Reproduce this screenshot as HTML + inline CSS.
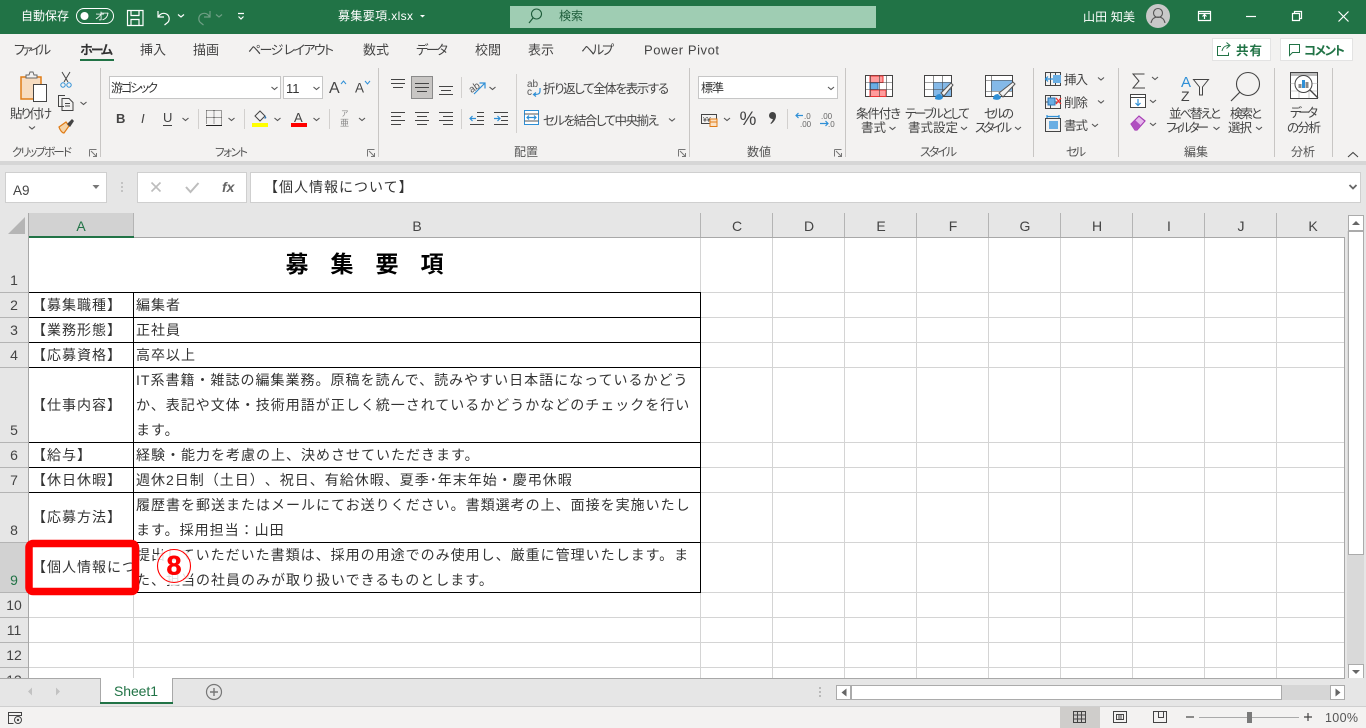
<!DOCTYPE html>
<html lang="ja">
<head>
<meta charset="utf-8">
<title>募集要項.xlsx - Excel</title>
<style>
html,body{margin:0;padding:0;width:1366px;height:728px;overflow:hidden;background:#fff}
svg{position:absolute;left:0;top:0;display:block}
text{font-family:"Liberation Sans","Noto Sans CJK JP",sans-serif;white-space:pre;text-spacing-trim:space-all}
text[textLength]{font-feature-settings:"palt"}
.r{font-size:12.5px;fill:#444}
.w{font-size:12px;fill:#fff}
.tab{font-size:13px;fill:#444}
.n{font-size:14px;fill:#444;text-anchor:middle}
.c{font-size:14px;fill:#333;letter-spacing:1px}
.i{fill:none;stroke:#444;stroke-width:1}
.iw{fill:none;stroke:#fff;stroke-width:1.2}
.b{fill:none;stroke:#2e8fd6;stroke-width:1.2}
.ch{fill:none;stroke:#555;stroke-width:1.1}
.l{fill:none;stroke:#777;stroke-width:1}
</style>
</head>
<body>
<svg width="1366" height="728" viewBox="0 0 1366 728" xmlns="http://www.w3.org/2000/svg">
<!-- backgrounds -->
<rect x="0" y="0" width="1366" height="34" fill="#217346"/>
<rect x="0" y="34" width="1366" height="127" fill="#f3f2f1"/>
<rect x="0" y="161" width="1366" height="4" fill="#d6d6d6"/>
<rect x="0" y="165" width="1366" height="72" fill="#e6e6e6"/>
<rect x="0" y="237" width="28" height="441" fill="#e6e6e6"/>
<rect x="29" y="237" width="1316" height="441" fill="#fff"/>
<rect x="1345" y="213" width="21" height="465" fill="#e6e6e6"/>

<!-- title bar -->
<text class="w" x="21" y="20" textLength="48">自動保存</text>
<rect x="76.500" y="8.500" width="37" height="15" rx="7.500" fill="none" stroke="#fff"/>
<circle cx="84.500" cy="16" r="4" fill="#fff"/>
<text x="95" y="20" font-size="10" fill="#fff" textLength="14">オフ</text>
<path class="iw" d="M127.500 10.500h15.500v15h-15.500zM131 10.500v5h8v-5M131 25.500v-6h8v6"/>
<path class="iw" d="M158 11v6h6M158.500 16.500c2-3 5-4 8-2.500 3.500 2 3.500 7 .5 9l-2.500 2"/>
<path class="iw" d="M178 14.500l3 2.500 3-2.500"/>
<path d="M210 11v6h-6M209.500 16.500c-2-3-5-4-8-2.500-3.500 2-3.500 7-.5 9l2.500 2" fill="none" stroke="#6f9f85" stroke-width="1.200"/>
<path d="M216 14.500l3 2.500 3-2.500" fill="none" stroke="#6f9f85" stroke-width="1.200"/>
<path class="iw" d="M238 13.500h6M238.500 16.500l2.500 2.500 2.500-2.500"/>
<text class="w" x="338" y="20" textLength="75">募集要項.xlsx</text>
<path d="M420 15h5l-2.500 2.500z" fill="#fff"/>
<rect x="510" y="6" width="366" height="22" fill="#9fcdb3"/>
<circle cx="536.500" cy="14" r="5" fill="none" stroke="#1d5c3a" stroke-width="1.100"/>
<path d="M533 18l-4 5" stroke="#1d5c3a" stroke-width="1.200"/>
<text x="559" y="20" font-size="12" fill="#1d5c3a" textLength="24">検索</text>
<text class="w" x="1083" y="21" textLength="52">山田 知美</text>
<circle cx="1158" cy="16" r="12" fill="#c8c8c8"/>
<circle cx="1158" cy="13" r="4.500" fill="none" stroke="#555" stroke-width="1.100"/>
<path d="M1151 23c1-5 4-6 7-6s6 1 7 6" fill="none" stroke="#555" stroke-width="1.100"/>
<path class="iw" d="M1198.500 11.500h12v9h-12zM1198.500 13.500h12M1204.500 19v-4M1202.500 16.500l2-2 2 2" stroke-width="1"/>
<path class="iw" d="M1246 16.500h10" stroke-width="1"/>
<path class="iw" d="M1292.500 13.500h7v7h-7zM1294.500 13.500v-2h7v7h-2" stroke-width="1"/>
<path class="iw" d="M1338.500 11.500l10 10M1348.500 11.500l-10 10" stroke-width="1"/>

<!-- tabs -->
<text class="tab" x="14" y="54.500" textLength="37">ファイル</text>
<text class="tab" x="80" y="54.500" textLength="33" font-weight="700" style="fill:#333">ホーム</text>
<rect x="80" y="59" width="34" height="2" fill="#217346"/>
<text class="tab" x="140" y="54.500" textLength="26">挿入</text>
<text class="tab" x="193" y="54.500" textLength="26">描画</text>
<text class="tab" x="248" y="54.500" textLength="86">ページ レイアウト</text>
<text class="tab" x="363" y="54.500" textLength="26">数式</text>
<text class="tab" x="416" y="54.500" textLength="32">データ</text>
<text class="tab" x="475" y="54.500" textLength="26">校閲</text>
<text class="tab" x="528" y="54.500" textLength="26">表示</text>
<text class="tab" x="581" y="54.500" textLength="33">ヘルプ</text>
<text class="tab" x="644" y="54.500" textLength="75">Power Pivot</text>

<!-- share / comment -->
<rect x="1212.500" y="38.500" width="58" height="22" fill="#fff" stroke="#e3e3e3"/>
<path d="M1221 46.500h-3.500v9h11v-3M1222 51c1-4 3-5.500 7-5.500M1226.500 42.500l3.500 3-3.500 3" fill="none" stroke="#217346" stroke-width="1"/>
<text x="1236" y="55" font-size="12.500" font-weight="700" fill="#217346" textLength="26">共有</text>
<rect x="1280.500" y="38.500" width="72" height="22" fill="#fff" stroke="#e3e3e3"/>
<path d="M1289.500 44.500h10v8h-7l-3 3z" fill="none" stroke="#217346" stroke-width="1"/>
<text x="1304" y="55" font-size="12.500" font-weight="700" fill="#217346" textLength="41">コメント</text>

<!-- ribbon separators -->
<path d="M100.500 68v89M378.500 68v89M689.500 68v89M845.500 68v89M1033.500 68v89M1118.500 68v89M1274.500 68v89M1332.500 68v89" stroke="#c8c6c4" fill="none"/>
<path d="M198.500 109v20M244.500 109v20M329.500 109v20M461.500 77v21M461.500 109v20M516.500 74v59M787.500 109v20" stroke="#d2d0ce" fill="none"/>

<!-- clipboard -->
<rect x="21" y="77" width="20" height="22" fill="#f7dcc0" stroke="#e07c17" stroke-width="1.500"/>
<path d="M26 77v-2h3l1-3h3l1 3h3v3h-11z" fill="#f3f2f1" stroke="#666"/>
<rect x="33.500" y="84.500" width="13" height="17" fill="#fff" stroke="#444"/>
<text class="r" x="10" y="118" textLength="42">貼り付け</text>
<path class="ch" d="M29 126.500l3 2.500 3-2.500"/>
<path d="M62 72l6 10M70 72l-6 10" stroke="#444" fill="none"/>
<circle cx="63" cy="85" r="2.200" fill="none" stroke="#2e8fd6"/>
<circle cx="69" cy="85" r="2.200" fill="none" stroke="#2e8fd6"/>
<path class="i" d="M64 106.500h-5.500v-11h6.500M62 98.500h7l4 4v8h-11z"/>
<path class="i" d="M65 103.500h5M65 106h5" stroke-width=".8"/>
<path class="ch" d="M80.500 102l3 2.500 3-2.500"/>
<path d="M59 127l7-5 3 4-5 7c-2 0-4-3-5-6z" fill="#f5d4a8" stroke="#e07c17" stroke-width="1.200"/>
<path d="M67 124l5-5 2 2-4 6z" fill="#444"/>
<text x="12" y="156" font-size="11.500" fill="#555" textLength="60">クリップボード</text>
<path class="l" d="M89.500 149.500h7M89.500 149.500v7M91 151l5 5M96.500 153v3.500h-3.500"/>

<!-- font -->
<rect x="109.500" y="76.500" width="171" height="22" fill="#fff" stroke="#c6c6c6"/>
<text x="111" y="92" font-size="12" fill="#333" textLength="47">游ゴシック</text>
<path class="ch" d="M271.500 87l3 2.500 3-2.500"/>
<rect x="283.500" y="76.500" width="39" height="22" fill="#fff" stroke="#c6c6c6"/>
<text x="286" y="93" font-size="13" fill="#333">11</text>
<path class="ch" d="M313.500 87l3 2.500 3-2.500"/>
<text x="329" y="93" font-size="16" fill="#444">A</text>
<path d="M341 84l2.500-3 2.500 3" stroke="#2e8fd6" fill="none"/>
<text x="355" y="92.500" font-size="13.500" fill="#444">A</text>
<path d="M365 81l2.500 3 2.500-3" stroke="#2e8fd6" fill="none"/>
<text x="116" y="123" font-size="13" font-weight="700" fill="#444">B</text>
<text x="141" y="123" font-size="13" font-style="italic" fill="#444" font-family="Liberation Serif">I</text>
<text x="163" y="122" font-size="13" fill="#444">U</text>
<path d="M163 125.500h9" stroke="#444" fill="none"/>
<path class="ch" d="M182.500 118l3 2.500 3-2.500"/>
<path d="M206.500 110.500h15v14M206.500 110.500v14M214 110.500v14M206.500 117.500h15" fill="none" stroke="#444" stroke-dasharray="1 1"/>
<path d="M206 125.500h16" stroke="#222" fill="none"/>
<path class="ch" d="M228.500 118l3 2.500 3-2.500"/>
<path d="M255 116l5-5 5 5-5 5z" fill="none" stroke="#444"/>
<path d="M265 115l1.500 3-2 1z" fill="#2e75b6"/>
<rect x="252" y="123" width="16" height="4" fill="#ffff00"/>
<path class="ch" d="M274.500 118l3 2.500 3-2.500"/>
<text x="294" y="122" font-size="13" fill="#444">A</text>
<rect x="291" y="123" width="16" height="4" fill="#f00"/>
<path class="ch" d="M313.500 118l3 2.500 3-2.500"/>
<text x="341" y="116" font-size="7.500" fill="#888">ア</text>
<text x="340" y="126" font-size="9" fill="#888">亜</text>
<path class="ch" d="M359 118l3 2.500 3-2.500"/>
<text x="215" y="156" font-size="11.500" fill="#555" textLength="33">フォント</text>
<path class="l" d="M367.500 149.500h7M367.500 149.500v7M369 151l5 5M374.500 153v3.500h-3.500"/>

<!-- alignment -->
<path class="i" d="M391 79.500h14M391 83.500h14M393 87.500h10"/>
<rect x="411.500" y="76.500" width="21" height="22" fill="#c8c6c4" stroke="#8a8a8a"/>
<path class="i" d="M415 83.500h14M415 87.500h14M417 91.500h10"/>
<path class="i" d="M439 86.500h14M441 90.500h10M439 94.500h14"/>
<path class="i" d="M391 112.500h14M391 116.500h10M391 120.500h14M391 124.500h10"/>
<path class="i" d="M415 112.500h14M417 116.500h10M415 120.500h14M417 124.500h10"/>
<path class="i" d="M439 112.500h14M443 116.500h10M439 120.500h14M443 124.500h10"/>
<text x="468" y="90" font-size="10" fill="#555" transform="rotate(-35 475 86)">ab</text>
<path d="M474 94l11-11M479.500 83h5.500v5.500" stroke="#2e8fd6" fill="none" stroke-width="1.200"/>
<path class="ch" d="M489.500 87l3 2.500 3-2.500"/>
<path class="i" d="M477 112.500h7M477 116.500h7M477 120.500h7M470 124.500h14"/>
<path class="b" d="M476 118.500h-6M472.500 116l-2.500 2.500 2.500 2.500"/>
<path class="i" d="M494 112.500h14M501 116.500h7M501 120.500h7M494 124.500h14"/>
<path class="b" d="M494 118.500h6M497.500 116l2.500 2.500-2.500 2.500"/>
<text x="527" y="87" font-size="10" fill="#555">ab</text>
<text x="527" y="95" font-size="10" fill="#555">c</text>
<path class="b" d="M540 88v3c0 3-2 3.500-6 3.500M536 92.500l-2.500 2 2.500 2"/>
<text class="r" x="543" y="93" textLength="126">折り返して全体を表示する</text>
<rect x="524.500" y="110.500" width="14" height="14" fill="#fff" stroke="#2e8fd6"/>
<path d="M524.500 114h14M524.500 121h14" stroke="#555" fill="none"/>
<path class="b" d="M527 117.500h9M529 115.500l-2 2 2 2M534 115.500l2 2-2 2"/>
<text class="r" x="543" y="125" textLength="116">セルを結合して中央揃え</text>
<path class="ch" d="M669 118.500l3 2.500 3-2.500"/>
<text x="514" y="156" font-size="12" fill="#555" textLength="24">配置</text>
<path class="l" d="M678.500 149.500h7M678.500 149.500v7M680 151l5 5M685.500 153v3.500h-3.500"/>

<!-- number -->
<rect x="698.500" y="76.500" width="139" height="22" fill="#fff" stroke="#c6c6c6"/>
<text x="701" y="92" font-size="12" fill="#333" textLength="23">標準</text>
<path class="ch" d="M828 87l3 2.500 3-2.500"/>
<rect x="701.500" y="114.500" width="15" height="9" fill="none" stroke="#444"/>
<text x="703" y="122" font-size="7" fill="#444">¥¥</text>
<rect x="710" y="119" width="7" height="7" fill="#fbe2c6" stroke="#e07c17"/>
<rect x="710" y="122" width="7" height="4.500" fill="#fbe2c6" stroke="#e07c17"/>
<path class="ch" d="M724 118l3 2.500 3-2.500"/>
<text x="739.500" y="125" font-size="19" fill="#444">%</text>
<circle cx="772.500" cy="115.500" r="3.500" fill="#444"/>
<path d="M776 116c0 3-2 6-5 8l-.6-.8c1.500-1.500 2.400-3 2.600-5z" fill="#444"/>
<text x="804" y="119" font-size="8" fill="#666">.0</text>
<text x="800" y="127" font-size="8" fill="#666">.00</text>
<path class="b" d="M803 115.500h-7M798.500 113l-2.500 2.500 2.500 2.500"/>
<text x="821" y="119" font-size="8" fill="#666">.00</text>
<text x="828" y="127" font-size="8" fill="#666">.0</text>
<path class="b" d="M820 123.500h8M825.500 121l2.500 2.500-2.500 2.500"/>
<text x="747" y="156" font-size="12" fill="#555" textLength="24">数値</text>
<path class="l" d="M834.500 149.500h7M834.500 149.500v7M836 151l5 5M841.500 153v3.500h-3.500"/>

<!-- styles -->
<rect x="865.500" y="75.500" width="27" height="21" fill="#fff" stroke="#444"/>
<rect x="870" y="76" width="13" height="6.500" fill="#ff9c9c" stroke="#e33"/>
<rect x="870" y="83" width="8" height="6.500" fill="#6aaee3" stroke="#2e75b6"/>
<rect x="870" y="90" width="16" height="6.500" fill="#ff9c9c" stroke="#e33"/>
<path d="M870.500 75.500v21M879.500 75.500v21M886.500 75.500v21M865.500 82.500h27M865.500 89.500h27" stroke="#444" fill="none" stroke-width=".6"/>
<text class="r" x="856" y="118" textLength="45">条件付き</text>
<text class="r" x="861" y="132" textLength="25">書式</text>
<path class="ch" d="M889.500 127l3 2.500 3-2.500"/>
<rect x="924.500" y="75.500" width="27" height="21" fill="#fff" stroke="#444"/>
<rect x="933" y="82" width="18" height="14" fill="#84b9e8"/>
<path d="M924.500 82.500h27M924.500 89.500h27M933.500 75.500v21M942.500 75.500v21" stroke="#444" fill="none" stroke-width=".6"/>
<path d="M935 99c0-3 2-5 5-5l3 3c0 2-3 4-8 2z" fill="#2e8fd6"/>
<path d="M941 93l10-10 2 2-9 11z" fill="#f3f2f1" stroke="#555"/>
<text class="r" x="905" y="118" textLength="65">テーブルとして</text>
<text class="r" x="908" y="132" textLength="50">書式設定</text>
<path class="ch" d="M961 127l3 2.500 3-2.500"/>
<rect x="985.500" y="75.500" width="27" height="21" fill="#fff" stroke="#444"/>
<rect x="991" y="80" width="21" height="11" fill="#84b9e8"/>
<path d="M985.500 80.500h27M985.500 91.500h27M991.500 75.500v21" stroke="#444" fill="none" stroke-width=".6"/>
<path d="M993 99c0-3 2-5 5-5l3 3c0 2-3 4-8 2z" fill="#2e8fd6"/>
<path d="M999 93l14-11 2 2-12 13z" fill="#f3f2f1" stroke="#555"/>
<text class="r" x="984" y="118" textLength="30">セルの</text>
<text class="r" x="975" y="132" textLength="37">スタイル</text>
<path class="ch" d="M1015 127l3 2.500 3-2.500"/>
<text x="920" y="156" font-size="12" fill="#555" textLength="37">スタイル</text>

<!-- cells -->
<path class="i" d="M1045.500 72.500h15v13h-15zM1045.500 79h15M1050.500 72.500v13M1055.500 72.500v13"/>
<rect x="1053" y="75" width="8" height="8" fill="#6aaee3"/>
<path class="b" d="M1053 79h-8M1048 76.500l-2.500 2.500 2.500 2.500"/>
<text class="r" x="1064" y="84" textLength="24">挿入</text>
<path class="ch" d="M1098 77.500l3 2.500 3-2.500"/>
<path class="i" d="M1045.500 95.500h15v13h-15zM1045.500 102h15M1050.500 95.500v13"/>
<rect x="1048" y="98" width="7" height="7" fill="#6aaee3" stroke="#2e75b6"/>
<path d="M1056 98l5 6M1061 98l-5 6" stroke="#e33" fill="none" stroke-width="1.300"/>
<text class="r" x="1064" y="107" textLength="24">削除</text>
<path class="ch" d="M1098 100.500l3 2.500 3-2.500"/>
<path class="i" d="M1045.500 118.500h15v13h-15z"/>
<rect x="1049" y="121" width="9" height="8" fill="#6aaee3"/>
<path class="b" d="M1047 116.500h12M1047 115v3M1059 115v3" stroke-width="1"/>
<text class="r" x="1064" y="130" textLength="24">書式</text>
<path class="ch" d="M1092 124l3 2.500 3-2.500"/>
<text x="1066" y="156" font-size="12" fill="#555" textLength="20">セル</text>

<!-- editing -->
<path d="M1144.500 74h-11.500l6 7-6 7h12" fill="none" stroke="#444"/>
<path class="ch" d="M1152 77l3 2.500 3-2.500"/>
<rect x="1130.500" y="94.500" width="15" height="13" fill="#fff" stroke="#444"/>
<path class="i" d="M1130.500 97.500h15"/>
<path class="b" d="M1138 99v6M1135.500 103l2.500 2.500 2.500-2.500"/>
<path class="ch" d="M1150 100l3 2.500 3-2.500"/>
<path d="M1131 124l8-8 6 5-8 9h-2z" fill="#e6b8ec" stroke="#a63fb5" stroke-width="1.200"/>
<path d="M1135 120l6 5.500-4 4.500h-2l-4-6z" fill="#b04fc0"/>
<path class="ch" d="M1150 123l3 2.500 3-2.500"/>
<text x="1181" y="87" font-size="15" fill="#2e8fd6">A</text>
<text x="1181" y="101" font-size="14" fill="#444">Z</text>
<path class="i" d="M1193.500 79.500h15l-6 7.500v8l-3 0v-8z" stroke-width="1.200"/>
<text class="r" x="1169" y="118" textLength="52">並べ替えと</text>
<text class="r" x="1166" y="132" textLength="43">フィルター</text>
<path class="ch" d="M1213.500 127l3 2.500 3-2.500"/>
<circle cx="1248" cy="84" r="11.500" fill="none" stroke="#444" stroke-width="1.100"/>
<path d="M1240 92l-9 9" stroke="#444" fill="none" stroke-width="1.200"/>
<text class="r" x="1230" y="118" textLength="32">検索と</text>
<text class="r" x="1228" y="132" textLength="24">選択</text>
<path class="ch" d="M1256 127l3 2.500 3-2.500"/>
<text x="1184" y="156" font-size="12" fill="#555" textLength="24">編集</text>

<!-- analysis -->
<rect x="1290.500" y="72.500" width="27" height="26" fill="#fff" stroke="#444"/>
<rect x="1291" y="73" width="26" height="3" fill="#bbb"/>
<path d="M1290.500 83.500h27M1290.500 91h27M1299 76v22M1309 76v22" stroke="#aaa" fill="none" stroke-width=".6"/>
<circle cx="1303.500" cy="84" r="8.500" fill="#fff" stroke="#444"/>
<rect x="1298.500" y="84" width="3" height="4" fill="#888"/>
<rect x="1302" y="80" width="3" height="8" fill="#2e8fd6"/>
<rect x="1305.500" y="82" width="3" height="6" fill="#888"/>
<path d="M1310 90l8 8" stroke="#444" stroke-width="1.300" fill="none"/>
<text class="r" x="1290" y="117" textLength="28">データ</text>
<text class="r" x="1287" y="132" textLength="34">の分析</text>
<text x="1291" y="156" font-size="12" fill="#555" textLength="24">分析</text>
<path d="M1348 157l5-4.500 5 4.500" fill="none" stroke="#444" stroke-width="1.100"/>

<!-- formula bar -->
<rect x="5.500" y="172.500" width="101" height="30" fill="#fff" stroke="#cfcfcf"/>
<text x="13" y="195" font-size="13.500" fill="#444">A9</text>
<path d="M92.500 185h7l-3.500 4z" fill="#777"/>
<circle cx="122" cy="183" r=".9" fill="#aaa"/>
<circle cx="122" cy="187" r=".9" fill="#aaa"/>
<circle cx="122" cy="191" r=".9" fill="#aaa"/>
<rect x="137.500" y="172.500" width="109" height="30" fill="#fff" stroke="#cfcfcf"/>
<path d="M151.500 182.500l9 9M160.500 182.500l-9 9" stroke="#bdbdbd" stroke-width="1.600" fill="none"/>
<path d="M186 187l4.500 5 8-9" stroke="#bdbdbd" stroke-width="2" fill="none"/>
<text x="222" y="192" font-size="14" font-style="italic" font-weight="700" fill="#666" font-family="Liberation Serif">fx</text>
<rect x="250.500" y="172.500" width="1110" height="30" fill="#fff" stroke="#cfcfcf"/>
<text class="c" x="264" y="192" style="fill:#333">【個人情報について】</text>
<path d="M1349.500 185l3.500 3.500 3.500-3.500" stroke="#666" stroke-width="1.800" fill="none"/>

<!-- headers -->
<path d="M25 217v17h-17z" fill="#b5b5b5"/>
<rect x="29" y="213" width="104" height="24" fill="#d2d2d2"/>
<path d="M133.500 213v24M700.500 213v24M772.500 213v24M844.500 213v24M916.500 213v24M988.500 213v24M1060.500 213v24M1132.500 213v24M1204.500 213v24M1276.500 213v24" stroke="#b4b4b4" fill="none"/>
<text class="n" x="81" y="231" style="fill:#217346">A</text>
<text class="n" x="417" y="231">B</text>
<text class="n" x="737" y="231">C</text>
<text class="n" x="809" y="231">D</text>
<text class="n" x="881" y="231">E</text>
<text class="n" x="953" y="231">F</text>
<text class="n" x="1025" y="231">G</text>
<text class="n" x="1097" y="231">H</text>
<text class="n" x="1169" y="231">I</text>
<text class="n" x="1241" y="231">J</text>
<text class="n" x="1313" y="231">K</text>
<rect x="0" y="542" width="28" height="50" fill="#d2d2d2"/>
<path d="M0 292.500h28M0 317.500h28M0 342.500h28M0 367.500h28M0 442.500h28M0 467.500h28M0 492.500h28M0 542.500h28M0 592.500h28M0 617.500h28M0 642.500h28M0 667.500h28" stroke="#b4b4b4" fill="none"/>
<text class="n" x="14" y="285">1</text>
<text class="n" x="14" y="310">2</text>
<text class="n" x="14" y="335">3</text>
<text class="n" x="14" y="360">4</text>
<text class="n" x="14" y="435">5</text>
<text class="n" x="14" y="460">6</text>
<text class="n" x="14" y="485">7</text>
<text class="n" x="14" y="535">8</text>
<text class="n" x="14" y="585" style="fill:#217346">9</text>
<text class="n" x="14" y="610">10</text>
<text class="n" x="14" y="635">11</text>
<text class="n" x="14" y="660">12</text>
<text class="n" x="14" y="685">13</text>

<!-- gridlines -->
<path d="M133.500 592v86M700.500 237v441M772.500 237v441M844.500 237v441M916.500 237v441M988.500 237v441M1060.500 237v441M1132.500 237v441M1204.500 237v441M1276.500 237v441" stroke="#d4d4d4" fill="none"/>
<path d="M701 292.500h644M701 317.500h644M701 342.500h644M701 367.500h644M701 442.500h644M701 467.500h644M701 492.500h644M701 542.500h644M29 617.500h1316M29 642.500h1316M29 667.500h1316M701 592.500h644" stroke="#d4d4d4" fill="none"/>
<!-- table borders -->
<path d="M29 292.500h672M29 317.500h672M29 342.500h672M29 367.500h672M29 442.500h672M29 467.500h672M29 492.500h672M29 542.500h672M29 592.500h672M133.500 292v301M700.500 292v301" stroke="#000" fill="none"/>
<path d="M28.500 213v465M1344.500 237v441M28 237.500h1317" stroke="#a8a8a8" fill="none"/>
<rect x="29" y="236" width="105" height="2" fill="#217346"/>

<!-- cell text -->
<text x="285.500" y="272" font-size="23" font-weight="700" fill="#000" letter-spacing="22">募集要項</text>
<text class="c" x="32" y="310">【募集職種】</text>
<text class="c" x="32" y="335">【業務形態】</text>
<text class="c" x="32" y="360">【応募資格】</text>
<text class="c" x="32" y="410">【仕事内容】</text>
<text class="c" x="32" y="460">【給与】</text>
<text class="c" x="32" y="485">【休日休暇】</text>
<text class="c" x="32" y="522">【応募方法】</text>
<text class="c" x="32" y="572">【個人情報につ</text>
<text class="c" x="136" y="310">編集者</text>
<text class="c" x="136" y="335">正社員</text>
<text class="c" x="136" y="360">高卒以上</text>
<text class="c" x="136" y="385">IT系書籍・雑誌の編集業務。原稿を読んで、読みやすい日本語になっているかどう</text>
<text class="c" x="136" y="410">か、表記や文体・技術用語が正しく統一されているかどうかなどのチェックを行い</text>
<text class="c" x="136" y="435">ます。</text>
<text class="c" x="136" y="460">経験・能力を考慮の上、決めさせていただきます。</text>
<text class="c" x="136" y="485">週休2日制（土日）、祝日、有給休暇、夏季･年末年始・慶弔休暇</text>
<text class="c" x="136" y="510">履歴書を郵送またはメールにてお送りください。書類選考の上、面接を実施いたし</text>
<text class="c" x="136" y="535">ます。採用担当：山田</text>
<text class="c" x="136" y="560">提出していただいた書類は、採用の用途でのみ使用し、厳重に管理いたします。ま</text>
<text class="c" x="136" y="585">た、担当の社員のみが取り扱いできるものとします。</text>

<!-- scrollbar vertical -->
<rect x="1347" y="231" width="17" height="434" fill="#d9d9d9"/>
<rect x="1348.500" y="215.500" width="15" height="15" fill="#fff" stroke="#ababab"/>
<path d="M1352 225l4-4 4 4z" fill="#666"/>
<rect x="1348.500" y="231.500" width="15" height="323" fill="#fff" stroke="#ababab"/>
<rect x="1348.500" y="664.500" width="15" height="14" fill="#fff" stroke="#ababab"/>
<path d="M1352 670l4 4 4-4z" fill="#666"/>

<!-- sheet tabs -->
<rect x="0" y="678" width="1366" height="28" fill="#e6e6e6"/>
<path d="M0 678.500h100M172 678.500h1173" stroke="#a8a8a8" fill="none"/>
<path d="M32 687.500l-4 4 4 4z" fill="#c2c2c2"/>
<path d="M56 687.500l4 4-4 4z" fill="#c2c2c2"/>
<rect x="100" y="678" width="73" height="25" fill="#fff"/>
<path d="M100.500 678v25M172.500 678v25" stroke="#a8a8a8" fill="none"/>
<rect x="100" y="702" width="73" height="2" fill="#217346"/>
<text x="114" y="696" font-size="14" fill="#217346" textLength="44">Sheet1</text>
<circle cx="214" cy="692" r="7.500" fill="none" stroke="#777" stroke-width="1.200"/>
<path d="M210 692h8M214 688v8" stroke="#777" stroke-width="1.400" fill="none"/>
<circle cx="820" cy="688" r=".9" fill="#999"/>
<circle cx="820" cy="692" r=".9" fill="#999"/>
<circle cx="820" cy="696" r=".9" fill="#999"/>
<rect x="836" y="685" width="509" height="15" fill="#d6d6d6"/>
<rect x="836.500" y="685.500" width="14" height="14" fill="#fff" stroke="#ababab"/>
<path d="M846.500 688.500l-5 4 5 4z" fill="#666"/>
<rect x="851.500" y="685.500" width="430" height="14" fill="#fff" stroke="#ababab"/>
<rect x="1330.500" y="685.500" width="14" height="14" fill="#fff" stroke="#ababab"/>
<path d="M1335.500 688.500l5 4-5 4z" fill="#666"/>

<!-- status bar -->
<rect x="0" y="706" width="1366" height="22" fill="#f3f2f1"/>
<path d="M0 706.500h1366" stroke="#cfcfcf" fill="none"/>
<path class="i" d="M8.500 712.500h13v3h-13zM8.500 715.500v8h5" stroke="#666"/>
<circle cx="18" cy="720" r="3.500" fill="none" stroke="#444"/>
<circle cx="18" cy="720" r="1.200" fill="#444"/>
<rect x="1060" y="707" width="40" height="21" fill="#cfcdcb"/>
<path class="i" d="M1073.500 711.500h12v11h-12zM1073.500 715h12M1073.500 719h12M1077.500 711.500v11M1081.500 711.500v11"/>
<path class="i" d="M1113.500 711.500h13v11h-13zM1116.500 714.500h7v5h-7zM1118 716h4M1118 718h4"/>
<path class="i" d="M1153.500 711.500h13v11h-13zM1158.500 711.500v6h5v-6"/>
<path d="M1186 717h8" stroke="#444" stroke-width="1.200" fill="none"/>
<path d="M1199 717.500h100" stroke="#aaa" fill="none"/>
<rect x="1247" y="712" width="5" height="11" fill="#7a7a7a"/>
<path d="M1304 717h8M1308 713v8" stroke="#444" stroke-width="1.200" fill="none"/>
<text x="1325" y="722" font-size="12.500" fill="#555" textLength="33">100%</text>

<!-- annotations -->
<rect x="29" y="543.500" width="106.500" height="48" rx="4" fill="none" stroke="#f00" stroke-width="7.500"/>
<circle cx="174" cy="566" r="19.500" fill="#fff" fill-opacity=".85"/>
<circle cx="174" cy="566" r="16.500" fill="none" stroke="#f00" stroke-width="1.100"/>
<text x="174" y="574.500" font-size="27" font-weight="700" fill="#f00" stroke="#f00" stroke-width=".5" text-anchor="middle">8</text>
</svg>
</body>
</html>
